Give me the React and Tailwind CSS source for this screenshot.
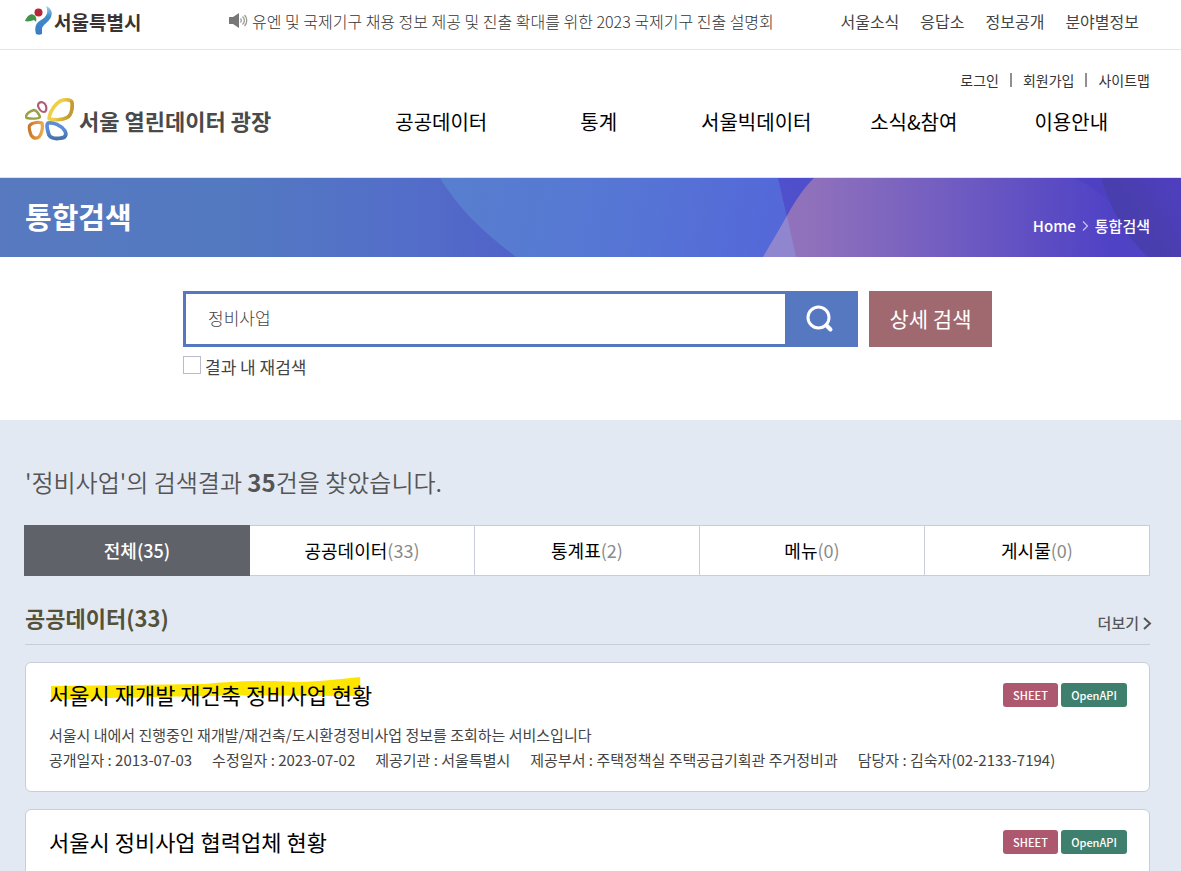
const topLinks = ['서울소식', '응답소', '정보공개', '분야별정보'];
const userLinks = ['로그인', '회원가입', '사이트맵'];
const mainMenu = ['공공데이터', '통계', '서울빅데이터', '소식&참여', '이용안내'];

const tabs = [
  { label: '전체', count: 35, active: true },
  { label: '공공데이터', count: 33 },
  { label: '통계표', count: 2 },
  { label: '메뉴', count: 0 },
  { label: '게시물', count: 0 },
];

const results = [
  {
    title: '서울시 재개발 재건축 정비사업 현황',
    marked: true,
    description: '서울시 내에서 진행중인 재개발/재건축/도시환경정비사업 정보를 조회하는 서비스입니다',
    meta: [
      '공개일자 : 2013-07-03',
      '수정일자 : 2023-07-02',
      '제공기관 : 서울특별시',
      '제공부서 : 주택정책실 주택공급기획관 주거정비과',
      '담당자 : 김숙자(02-2133-7194)',
    ],
  },
  { title: '서울시 정비사업 협력업체 현황' },
];

function SeoulMark() {
  return (
    <svg width="27" height="30" viewBox="0 0 27 30" aria-hidden="true">
      <defs>
        <linearGradient id="seoul-blue" x1="0" y1="0" x2="0" y2="1">
          <stop offset="0" stopColor="#a9d3ea" />
          <stop offset="0.35" stopColor="#3f8ccb" />
          <stop offset="1" stopColor="#3a7cc2" />
        </linearGradient>
      </defs>
      <path d="M0 15C2 10 6 7 9 9c2 1 3 4 2 7-1-2-3-2-5-1-2 0-3 1-6 0Z" fill="#45924a" />
      <path d="M21 0c5 2 7 6 5 11-2 5-9 8-9 12 0 2 0 4 0 5-2 1-4 1-6 0-2-7 0-11 5-14 5-3 8-7 5-14Z" fill="url(#seoul-blue)" />
      <circle cx="13.500" cy="6.500" r="4" fill="#b82536" />
    </svg>
  );
}

function PlazaMark() {
  return (
    <svg width="50" height="44" viewBox="0 0 50 44" fill="none" strokeLinejoin="round" aria-hidden="true">
      <defs>
        <linearGradient id="petal-yellow" x1="0" y1="0" x2="1" y2="0.400">
          <stop offset="0.500" stopColor="#efcf45" />
          <stop offset="1" stopColor="#c79f35" />
        </linearGradient>
        <linearGradient id="petal-blue" x1="0" y1="0" x2="0" y2="1">
          <stop offset="0.400" stopColor="#5f8cd6" />
          <stop offset="1" stopColor="#4673aa" />
        </linearGradient>
        <linearGradient id="petal-orange" x1="0" y1="0" x2="1" y2="0">
          <stop offset="0" stopColor="#cb772b" />
          <stop offset="1" stopColor="#eba84a" />
        </linearGradient>
      </defs>
      <path d="M24 20C25 13 31 4 38 2c7-1 10 1 9 5 0 6-1 10-4 12-5 3-12 3-18 2-1 0-1 0-1-1Z" stroke="url(#petal-yellow)" strokeWidth="3.500" />
      <path d="M46 3c3 4 1 13-3 16" stroke="#c39b34" strokeWidth="3" />
      <path d="M14 5c3-2 6 0 7 3 1 3 0 6-2 6-3 0-5-3-6-6 0-1 0-2 1-3Z" stroke="#ad5d79" strokeWidth="2.200" />
      <path d="M1 18c1-3 5-5 8-6 3 1 5 4 6 7-1 2-9 2-13 1-1 0-1-1-1-2Z" stroke="#9aa044" strokeWidth="2.400" />
      <path d="M5 27c3-3 9-3 12-2 1 4 0 11-3 14-3 2-6 1-8-2-1-3-3-8-1-10Z" stroke="url(#petal-orange)" strokeWidth="3.200" />
      <path d="M23 25c5-1 13 2 17 8 2 4 0 7-4 7-5 1-10 0-12-3-1-3-3-10-1-12Z" stroke="url(#petal-blue)" strokeWidth="3.800" />
    </svg>
  );
}

function SpeakerIcon() {
  return (
    <svg width="19" height="15" viewBox="0 0 19 15" aria-hidden="true">
      <path d="M0 4h4l6-4v15l-6-4H0Z" fill="#777" />
      <path d="M11.500 5.500c1 1 1 3 0 4M13.500 3.500c2.500 2 2.500 6 0 8M15.500 2c3 3 3 8 0 11" fill="none" stroke="#999" strokeWidth="1.300" />
    </svg>
  );
}

function BannerArt() {
  return (
    <svg className="absolute inset-0 h-full w-full" viewBox="0 0 1181 79" preserveAspectRatio="none" aria-hidden="true">
      <defs>
        <linearGradient id="base" gradientUnits="userSpaceOnUse" x1="0" y1="0" x2="1181" y2="0">
          <stop offset="0" stopColor="#5879bf" />
          <stop offset="0.200" stopColor="#5379c1" />
          <stop offset="0.340" stopColor="#536ec9" />
          <stop offset="0.430" stopColor="#5163c8" />
          <stop offset="0.660" stopColor="#4f50cd" />
          <stop offset="0.900" stopColor="#4d41c5" />
          <stop offset="1" stopColor="#503fc0" />
        </linearGradient>
        <linearGradient id="wave" gradientUnits="userSpaceOnUse" x1="440" y1="0" x2="790" y2="60">
          <stop offset="0" stopColor="#587fce" />
          <stop offset="0.500" stopColor="#5676d4" />
          <stop offset="1" stopColor="#5467d9" />
        </linearGradient>
        <linearGradient id="violet" gradientUnits="userSpaceOnUse" x1="763" y1="0" x2="1110" y2="0">
          <stop offset="0" stopColor="#9473b9" />
          <stop offset="0.150" stopColor="#8e70bc" />
          <stop offset="0.550" stopColor="#705cc1" />
          <stop offset="1" stopColor="#4f42c5" />
        </linearGradient>
        <linearGradient id="night" gradientUnits="userSpaceOnUse" x1="1110" y1="60" x2="1181" y2="10">
          <stop offset="0" stopColor="#493eab" />
          <stop offset="0.500" stopColor="#4a3eb0" />
          <stop offset="1" stopColor="#4f3fbf" />
        </linearGradient>
      </defs>
      <rect width="1181" height="79" fill="url(#base)" />
      <path d="M440 0C458 30 482 53 516 79H796L778 0Z" fill="url(#wave)" />
      <path d="M814 0C792 21 783 50 763 79H1150C1130 40 1105 15 1075 0Z" fill="url(#violet)" />
      <path d="M787 38 763 79H796Z" fill="#9085cf" />
      <path d="M1101 0C1110 30 1125 58 1148 79H1181V0Z" fill="url(#night)" />
    </svg>
  );
}

function Tab({ label, count, active }) {
  if (active) {
    return (
      <li className="relative -my-px -mr-px bg-[#5f6269]">
        <a href="#all" aria-current="page" className="flex h-[51px] items-center justify-center pb-0.5 font-medium text-white">
          {label}({count})
        </a>
      </li>
    );
  }
  return (
    <li className="border-l border-[#c9ccda] bg-white">
      <a href="#tab" className="flex h-[49px] items-center justify-center pb-0.5 text-black">
        {label}
        <span className="text-[#8a8a8a]">({count})</span>
      </a>
    </li>
  );
}

function ResultCard({ title, marked, description, meta }) {
  return (
    <li className="min-h-[130px] rounded-md border border-[#c9ccda] bg-white px-[23px] pt-4 pb-4">
      <div className="flex items-start justify-between">
        <h3 className="relative text-[22px] leading-[30px] text-black">
          {marked && (
            <svg className="absolute -top-0.5 -left-1 h-7 w-full" viewBox="0 0 320 28" preserveAspectRatio="none" aria-hidden="true">
              <path d="M6 9C60 8 110 8 158 7c30-3 70-4 88-2 24 0 44-3 66-5v19c-50 0-100-1-150 0-60 1-100 2-156 4Z" fill="#ffe600" />
            </svg>
          )}
          <a href="#detail" className="relative">{title}</a>
        </h3>
        <div className="mt-1 mr-[-1px] flex gap-[3px] text-[11px] font-medium text-white">
          <a href="#sheet" className="flex h-6 w-[55px] items-center justify-center rounded-[3px] bg-[#ad586f]">SHEET</a>
          <a href="#openapi" className="flex h-6 w-[66px] items-center justify-center rounded-[3px] bg-[#3f7f6d]">OpenAPI</a>
        </div>
      </div>
      {description && (
        <div className="mt-[13px] text-[15px] leading-[25px] text-[#444]">
          <p>{description}</p>
          <ul className="flex flex-wrap gap-x-5">
            {meta.map((item) => (
              <li key={item}>{item}</li>
            ))}
          </ul>
        </div>
      )}
    </li>
  );
}

export default function App() {
  return (
    <div className="h-screen overflow-hidden bg-white font-['Noto_Sans_CJK_KR','Noto_Sans_CJK_SC',sans-serif] text-[#555]">
      <div className="flex h-[50px] items-center border-b border-[#e5e5e5] pr-[42px] pb-2 pl-[25px]">
        <a href="#seoul" className="flex w-[204px] items-center gap-0.5 text-[19px] font-bold text-[#3b3333]">
          <SeoulMark />
          <span className="pt-1">서울특별시</span>
        </a>
        <a href="#notice" className="flex items-center gap-1 text-base font-light text-[#333]">
          <SpeakerIcon />
          유엔 및 국제기구 채용 정보 제공 및 진출 확대를 위한 2023 국제기구 진출 설명회
        </a>
        <nav className="ml-auto flex gap-[21px] text-base text-[#444]">
          {topLinks.map((link) => (
            <a key={link} href="#top">{link}</a>
          ))}
        </nav>
      </div>

      <header className="flex h-32 border-b border-[#dfe1ea] pr-[31px] pl-[25px]">
        <a href="#home" className="mt-12 flex h-11 w-[30%] items-center gap-1 text-[22px] font-bold text-[#4a4a4a]">
          <PlazaMark />
          서울 열린데이터 광장
        </a>
        <div className="w-[70%]">
          <ul className="mt-[19px] flex h-[22px] items-center justify-end text-sm text-[#333]">
            {userLinks.map((link, i) => (
              <li key={link} className="flex items-center">
                {i > 0 && <span className="mx-[11px] h-3.5 w-0.5 bg-[#909090]" />}
                <a href="#user">{link}</a>
              </li>
            ))}
          </ul>
          <nav className="mt-[15px] grid grid-cols-5 text-center text-xl text-black">
            {mainMenu.map((item) => (
              <a key={item} href="#menu" className="leading-8">{item}</a>
            ))}
          </nav>
        </div>
      </header>

      <div className="relative flex h-[79px] items-start justify-between pr-[31px] pl-[25px] text-white">
        <BannerArt />
        <h1 className="relative mt-4 text-[29px] leading-[44px] font-bold">통합검색</h1>
        <div className="relative mt-9 flex items-center gap-1.5 text-[15px] leading-6 font-medium">
          <a href="#home">Home</a>
          <svg width="7" height="10" viewBox="0 0 7 10" fill="none" stroke="#c9c3ee" strokeWidth="1.200" aria-hidden="true">
            <path d="M1 0.500 5.500 5 1 9.500" />
          </svg>
          <span>통합검색</span>
        </div>
      </div>

      <form className="mx-auto h-[163px] max-w-[815px] pt-[34px] pr-1.5" onSubmit={(e) => e.preventDefault()}>
        <div className="flex h-14">
          <input
            type="text"
            aria-label="검색어"
            defaultValue="정비사업"
            className="min-w-0 flex-1 border-3 border-r-0 border-[#5578c0] bg-white px-[22px] pb-0.5 text-[17px] font-light text-[#444] outline-none"
          />
          <button type="submit" aria-label="검색" className="flex w-[73px] items-center justify-center bg-[#5578c0] pr-1">
            <svg width="28" height="28" viewBox="0 0 28 28" fill="none" stroke="#fff" strokeLinecap="round" aria-hidden="true">
              <circle cx="12.500" cy="12.500" r="10.500" strokeWidth="3" />
              <path d="m20.500 20.500 4 4" strokeWidth="4" />
            </svg>
          </button>
          <button type="button" className="ml-[11px] w-[123px] bg-[#a0696f] text-[21px] text-white">상세 검색</button>
        </div>
        <label className="mt-1.5 flex items-start gap-1 text-[17px] leading-7 text-[#444]">
          <input type="checkbox" className="mt-[3px] size-[18px] appearance-none border border-[#b9bccd] bg-white" />
          결과 내 재검색
        </label>
      </form>

      <main className="bg-[#e3e9f3] pt-[42px] pr-[31px] pb-10 pl-[25px]">
        <h2 className="text-2xl leading-10 font-[350]">
          '정비사업'의 검색결과 <strong className="font-bold">35</strong>건을 찾았습니다.
        </h2>
        <ul className="mt-[23px] -ml-px grid grid-cols-5 border-y border-r border-[#c9ccda] text-lg">
          {tabs.map((tab) => (
            <Tab key={tab.label} {...tab} />
          ))}
        </ul>

        <section>
          <div className="mt-[23px] flex h-[46px] items-start justify-between border-b border-[#c9ccda]">
            <h2 className="text-[22px] leading-9 font-bold text-[#555139]">공공데이터(33)</h2>
            <a href="#more" className="mt-2.5 -mr-0.5 flex items-center gap-1 text-[15px] leading-7 font-medium">
              더보기
              <svg width="9" height="13" viewBox="0 0 9 13" fill="none" stroke="#555" strokeWidth="2" aria-hidden="true">
                <path d="m1 1 6 5.500L1 12" />
              </svg>
            </a>
          </div>
          <ul className="mt-[17px] flex flex-col gap-[17px]">
            {results.map((result) => (
              <ResultCard key={result.title} {...result} />
            ))}
          </ul>
        </section>
      </main>
    </div>
  );
}
